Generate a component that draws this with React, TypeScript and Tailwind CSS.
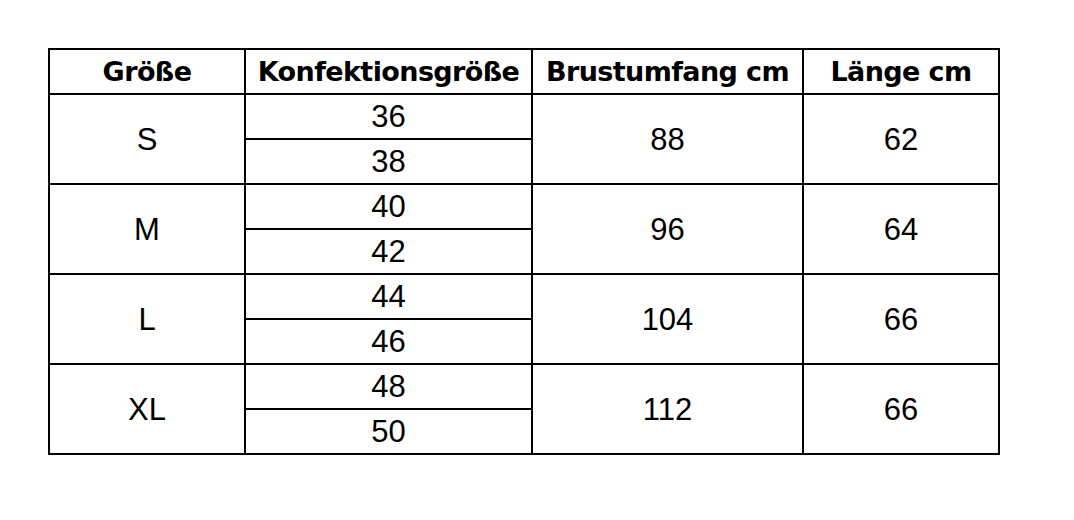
const rows = [
  { size: 'S', konf: ['36', '38'], brust: '88', laenge: '62' },
  { size: 'M', konf: ['40', '42'], brust: '96', laenge: '64' },
  { size: 'L', konf: ['44', '46'], brust: '104', laenge: '66' },
  { size: 'XL', konf: ['48', '50'], brust: '112', laenge: '66' },
];

const cell = 'border-2 border-black p-0 text-center align-middle text-[31px] leading-none';

export default function App() {
  return (
    <div className="min-h-screen w-full bg-white pt-[48px] pl-[48px] font-['Liberation_Sans',sans-serif] text-black">
      <table className="border-collapse border-2 border-black table-fixed w-[952px]">
        <colgroup>
          <col className="w-[196px]" />
          <col className="w-[287px]" />
          <col className="w-[271px]" />
          <col className="w-[196px]" />
        </colgroup>
        <thead>
          <tr className="h-[45px]">
            {['Größe', 'Konfektionsgröße', 'Brustumfang cm', 'Länge cm'].map((h) => (
              <th
                key={h}
                className="border-2 border-black p-0 text-center align-middle font-['DejaVu_Sans',sans-serif] text-[27px] font-bold tracking-[-0.6px] leading-none"
              >
                {h}
              </th>
            ))}
          </tr>
        </thead>
        <tbody>
          {rows.map((r) => (
            <>
              <tr key={r.size + 'a'} className="h-[45px]">
                <td rowSpan={2} className={cell}>
                  {r.size}
                </td>
                <td className={cell}>{r.konf[0]}</td>
                <td rowSpan={2} className={cell}>
                  {r.brust}
                </td>
                <td rowSpan={2} className={cell}>
                  {r.laenge}
                </td>
              </tr>
              <tr key={r.size + 'b'} className="h-[45px]">
                <td className={cell}>{r.konf[1]}</td>
              </tr>
            </>
          ))}
        </tbody>
      </table>
    </div>
  );
}
